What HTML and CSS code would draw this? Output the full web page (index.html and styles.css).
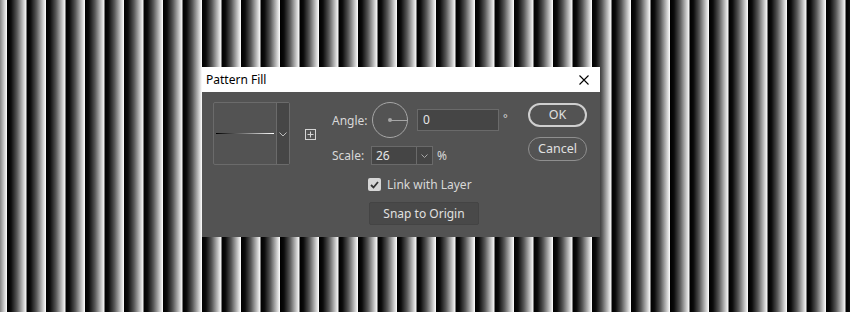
FILE: index.html
```html
<!DOCTYPE html>
<html lang="en">
<head>
    <meta charset="UTF-8">
    <title>Pattern Fill</title>
    <link rel="stylesheet" href="styles.css">
</head>
<body>
    <div class="dialog">
        <div class="titlebar">
            <span class="title">Pattern Fill</span>
            <svg class="close" width="10" height="10" viewBox="0 0 10 10">
                <path d="M0.5 0.5 L9.5 9.5 M9.5 0.5 L0.5 9.5" stroke="#000" stroke-width="1.1" fill="none"/>
            </svg>
        </div>

        <div class="content">
            <!-- Amostra do padrão -->
            <div class="preview">
                <div class="swatch"><div class="swatch-line"></div></div>
                <div class="swatch-drop">
                    <svg width="8" height="5" viewBox="0 0 8 5"><path d="M0.5 0.5 L4 4 L7.5 0.5" stroke="#bdbdbd" fill="none"/></svg>
                </div>
            </div>

            <div class="new-preset">
                <svg width="11" height="11" viewBox="0 0 11 11">
                    <rect x="0.5" y="0.5" width="10" height="10" stroke="#d4d4d4" fill="none"/>
                    <path d="M5.5 2.5 V8.5 M2.5 5.5 H8.5" stroke="#d4d4d4" fill="none"/>
                </svg>
            </div>

            <div class="options">
                <div class="row angle-row">
                    <label class="label angle-label">Angle:</label>
                    <div class="dial"><div class="dial-dot"></div><div class="dial-hand"></div></div>
                    <div class="field angle-field">0</div>
                    <span class="unit deg">°</span>
                </div>

                <div class="row scale-row">
                    <label class="label scale-label">Scale:</label>
                    <div class="field scale-field">
                        <span class="scale-value">26</span>
                        <span class="scale-drop">
                            <svg width="7" height="4" viewBox="0 0 7 4"><path d="M0.5 0.5 L3.5 3.5 L6.5 0.5" stroke="#a8a8a8" fill="none"/></svg>
                        </span>
                    </div>
                    <span class="unit pct">%</span>
                </div>

                <div class="row link-row">
                    <span class="checkbox">
                        <svg width="9" height="8" viewBox="0 0 9 8"><path d="M1 4 L3.5 6.5 L8 1" stroke="#333" stroke-width="1.8" fill="none"/></svg>
                    </span>
                    <span class="label">Link with Layer</span>
                </div>

                <div class="row snap-row">
                    <a href="#" class="btn-snap">Snap to Origin</a>
                </div>
            </div>

            <div class="actions">
                <a href="#" class="btn btn-ok">OK</a>
                <a href="#" class="btn btn-cancel">Cancel</a>
            </div>
        </div>
    </div>
</body>
</html>
```

FILE: styles.css
```css
* {
    margin: 0;
    padding: 0;
    box-sizing: border-box;
}

body {
    width: 850px;
    height: 312px;
    overflow: hidden;
    padding: 67px 0 0 202px;
    font-family: "Noto Sans", Arial, sans-serif;
    font-size: 12px;
    background-color: #000;
    background-image: linear-gradient(to right, #000 0%, #0a0a0a 20%, #555 50%, #bbb 80%, #fff 100%);
    background-size: 19.5px 100%;
    background-position: 7px 0;
}

.dialog {
    width: 398px;
    height: 170px;
    background-color: #535353;
}

.titlebar {
    height: 25px;
    background-color: #fff;
    display: flex;
    align-items: center;
    justify-content: space-between;
    padding: 0 11px 0 4px;
}

.title {
    color: #000;
    font-size: 12px;
}

.content {
    display: flex;
    align-items: flex-start;
    padding: 10px 0 0 11px;
}

/* Amostra */
.preview {
    width: 77px;
    height: 63px;
    border: 1px solid #6b6b6b;
    border-radius: 2px;
    display: flex;
    margin-right: 15px;
}

.swatch {
    flex: 1;
    padding: 30px 2px 0 2px;
}

.swatch-line {
    height: 1px;
    background: linear-gradient(to right, #000, #fff);
}

.swatch-drop {
    width: 13px;
    background-color: #464646;
    border-left: 1px solid #6b6b6b;
    display: flex;
    align-items: center;
    justify-content: center;
    padding-top: 2px;
}

.new-preset {
    margin-top: 27px;
    margin-right: 16px;
    display: flex;
}

/* Opções */
.options {
    display: flex;
    flex-direction: column;
    width: 196px;
}

.row {
    display: flex;
    align-items: center;
}

.label {
    color: #d8d8d8;
}

.angle-row {
    height: 36px;
}

.angle-label {
    width: 40px;
}

.dial {
    position: relative;
    width: 36px;
    height: 36px;
    border: 1px solid #a6a6a6;
    border-radius: 50%;
    margin-right: 9px;
}

.dial-dot {
    position: absolute;
    left: 15px;
    top: 15px;
    width: 4px;
    height: 4px;
    border-radius: 50%;
    background-color: #a6a6a6;
}

.dial-hand {
    position: absolute;
    left: 17px;
    top: 16.5px;
    width: 17px;
    height: 1.5px;
    background-color: #a6a6a6;
}

.field {
    background-color: #454545;
    border: 1px solid #6a6a6a;
    color: #e6e6e6;
}

.angle-field {
    width: 82px;
    height: 22px;
    line-height: 20px;
    padding-left: 5px;
}

.unit {
    color: #d8d8d8;
}

.deg {
    margin-left: 4px;
    margin-top: -6px;
    font-size: 11px;
}

.scale-row {
    margin-top: 8px;
    height: 19px;
}

.scale-label {
    width: 39px;
}

.scale-field {
    width: 62px;
    height: 19px;
    display: flex;
}

.scale-value {
    flex: 1;
    line-height: 17px;
    padding-left: 4px;
}

.scale-drop {
    width: 16px;
    border-left: 1px solid #6a6a6a;
    display: flex;
    align-items: center;
    justify-content: center;
    padding-top: 1px;
}

.pct {
    margin-left: 4px;
}

.link-row {
    margin-top: 13px;
    padding-left: 36px;
    height: 13px;
}

.checkbox {
    width: 13px;
    height: 13px;
    border-radius: 2px;
    background-color: #d6d6d6;
    display: flex;
    align-items: center;
    justify-content: center;
    margin-right: 6px;
}

.snap-row {
    margin-top: 11px;
    padding-left: 37px;
}

.btn-snap {
    display: block;
    width: 110px;
    height: 23px;
    line-height: 21px;
    text-align: center;
    background-color: #494949;
    border: 1px solid #444;
    border-radius: 2px;
    color: #e0e0e0;
    text-decoration: none;
}

/* Botões */
.actions {
    display: flex;
    flex-direction: column;
    gap: 10px;
    margin-left: auto;
    margin-right: 13px;
    padding-top: 1px;
}

.btn {
    display: block;
    width: 59px;
    height: 24px;
    border-radius: 12px;
    text-align: center;
    color: #e0e0e0;
    text-decoration: none;
    font-size: 12.5px;
}

.btn-ok {
    border: 2px solid #cfcfcf;
    line-height: 20px;
}

.btn-cancel {
    border: 1px solid #8f8f8f;
    line-height: 22px;
}
```
